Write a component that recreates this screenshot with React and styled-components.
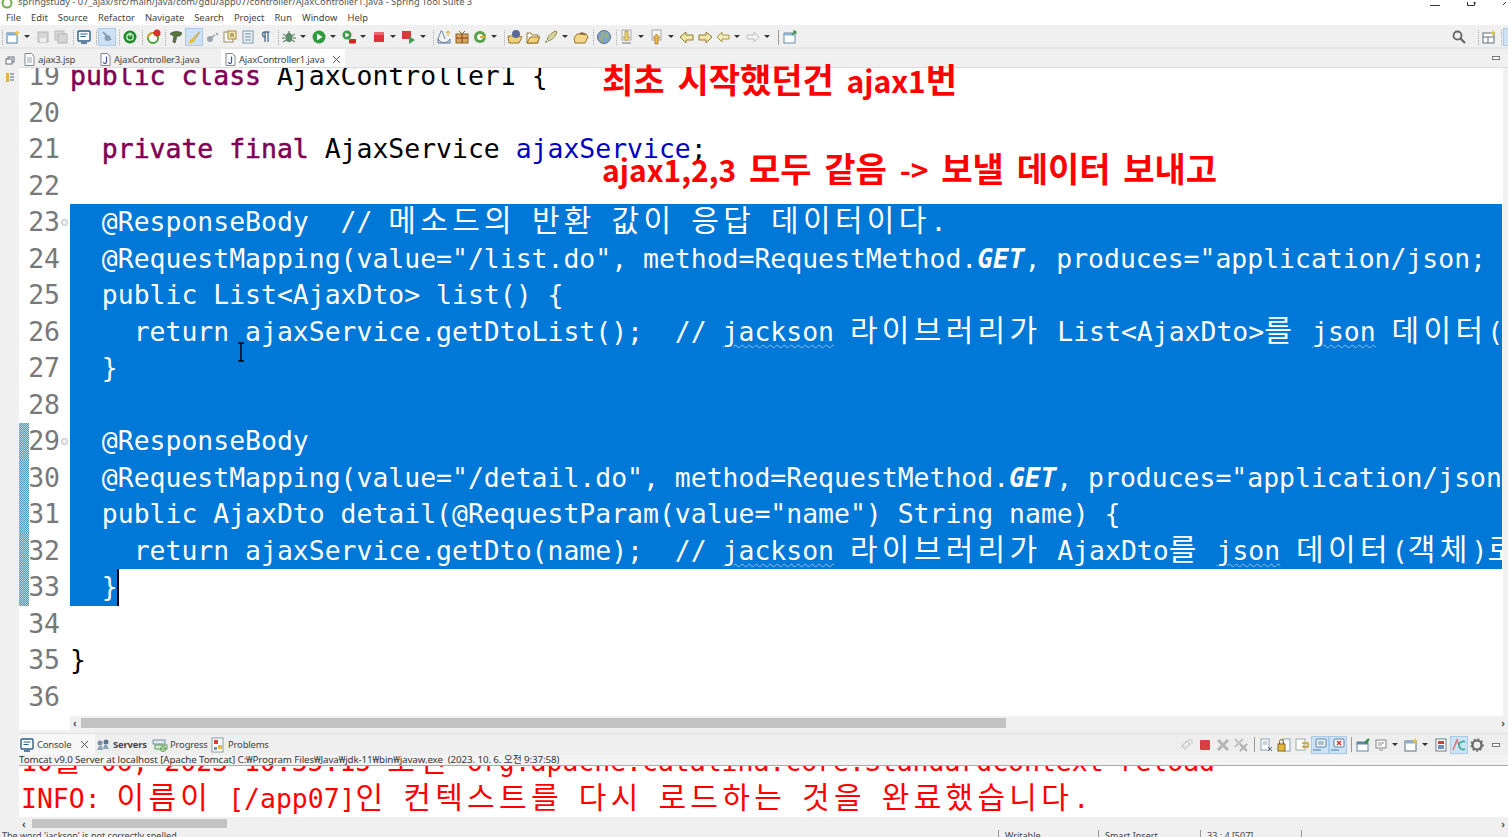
import React from 'react'
import styled, { createGlobalStyle } from 'styled-components'

const GlobalStyle = createGlobalStyle`
  html, body { margin: 0; padding: 0; height: 100%; overflow: hidden; background: #f0f0f0; }
  * { box-sizing: border-box; }
`

const MONO = `"DejaVu Sans Mono", "Noto Sans CJK KR", monospace`
const UI = `"Noto Sans", "Noto Sans CJK KR", sans-serif`

const Page = styled.div`
  position: relative;
  width: 1508px;
  height: 837px;
  display: flex;
  flex-direction: column;
  overflow: hidden;
  background: #f0f0f0;
  font-family: ${UI};
`

const TitleBar = styled.div`
  height: 10px;
  flex: none;
  background: #fff;
  display: flex;
  align-items: flex-end;
  gap: 5px;
  padding-bottom: 2px;
  font-size: 9.3px;
  line-height: 12px;
  color: #555;
  white-space: nowrap;
  overflow: hidden;
`

const AppIcon = styled.svg`
  flex: none;
  margin-left: 1px;
  margin-bottom: -2px;
`

const WindowButtons = styled.svg`
  flex: none;
  margin-left: auto;
  margin-bottom: -2px;
`

const MenuBar = styled.div`
  height: 15px;
  flex: none;
  background: #fff;
  display: flex;
  align-items: center;
  padding-left: 6px;
  gap: 10px;
  font-size: 9.4px;
  color: #444;
`

const ToolBar = styled.div`
  height: 24px;
  flex: none;
  display: flex;
  align-items: center;
  padding: 2px 0 0 0;
  border-bottom: 2px solid #e6e6e6;
  background: #f0f0f0;
  overflow: hidden;
`

const Tool = styled.span`
  width: ${p => p.$w || 16}px;
  height: 16px;
  margin-right: ${p => p.$gap ?? 2}px;
  margin-left: ${p => p.$lead || 0}px;
  flex: none;
  display: inline-flex;
  align-items: center;
  justify-content: center;
  background: ${p => (p.$on ? '#cfe2f5' : 'transparent')};
  outline: ${p => (p.$on ? '1px solid #a9cbe8' : 'none')};
`

const Sep = styled.span`
  flex: none;
  width: 1px;
  height: 15px;
  margin: 0 ${p => (p.$solid ? 3 : 2)}px;
  border-left: 1px ${p => (p.$solid ? 'solid #999' : 'dotted #aaa')};
`

const Spacer = styled.span`
  flex: 1;
`

const Workspace = styled.div`
  flex: 1;
  display: flex;
  min-height: 0;
`

const TrimStack = styled.div`
  width: 19px;
  flex: none;
  display: flex;
  flex-direction: column;
  align-items: center;
  gap: 7px;
  padding-top: 7px;
  background: #f0f0f0;
`

const EditorPane = styled.div`
  flex: 1;
  display: flex;
  flex-direction: column;
  min-width: 0;
`

const TabStrip = styled.div`
  height: 19px;
  flex: none;
  display: flex;
  align-items: stretch;
  padding-left: 3px;
  background: #f0f0f0;
  border-bottom: 1px solid #dcdcdc;
  position: relative;
  z-index: 2;
`

const EditorTab = styled.div`
  display: flex;
  align-items: center;
  gap: 3px;
  padding: 2px 0 0 ${p => (p.$active ? 4 : 2)}px;
  width: ${p => p.$w}px;
  background: ${p => (p.$active ? '#fff' : 'transparent')};
  font-size: 9.5px;
  letter-spacing: -0.2px;
  color: #444;
  white-space: nowrap;
`

const CloseMark = styled.svg`
  flex: none;
  margin-left: ${p => p.$lead}px;
`

const Minimize = styled.span`
  margin-left: ${p => p.$lead || 'auto'};
  margin-right: 8px;
  align-self: center;
  flex: none;
  width: 8px;
  height: 4px;
  border: 1px solid #777;
  background: #fff;
`

const Editor = styled.div`
  height: 662px;
  flex: none;
  position: relative;
  overflow: hidden;
  background: #fff;
  font-family: ${MONO};
  font-size: 26.45px;
`

const CodeArea = styled.div`
  margin-top: -10px;
`

const Line = styled.div`
  height: 36.5px;
  line-height: 36.5px;
  display: flex;
  white-space: pre;
  position: relative;
`

const Gutter = styled.div`
  width: 51px;
  flex: none;
  text-align: right;
  padding-right: 10px;
  color: #787878;
  position: relative;
  ${p => p.$changed && `
    &::before {
      content: '';
      position: absolute;
      left: 0;
      top: 0;
      bottom: 0;
      width: 10px;
      background: repeating-conic-gradient(#4f9dbb 0 25%, #a9d5e0 0 50%) 0 0 / 2px 2px;
    }
  `}
`

const GutterNumber = styled.span`
  position: relative;
`

const FoldMark = styled.span`
  position: absolute;
  right: 2px;
  top: 15px;
  width: 7px;
  height: 7px;
  border-radius: 50%;
  border: 1px solid #bbb;
  background: #eee;
`

const Code = styled.div`
  flex: ${p => (p.$partial ? 'none' : '1')};
  width: ${p => (p.$partial ? '49px' : 'auto')};
  min-width: 0;
  overflow: ${p => (p.$partial ? 'visible' : 'hidden')};
  background: ${p => (p.$selected ? '#0078d7' : 'transparent')};
  color: ${p => (p.$selected ? '#fff' : '#000')};
  margin-right: 6px;
  position: relative;
`

const Keyword = styled.span`
  color: #7f0055;
  -webkit-text-stroke: 0.5px #7f0055;
`

const Field = styled.span`
  color: #0000c0;
`

const Italic = styled.span`
  font-style: italic;
  font-weight: 700;
  letter-spacing: -0.2px;
`

const Squiggle = styled.span`
  text-decoration: underline wavy #9bbfe6 1px;
  text-underline-offset: 3px;
`

const Ko = styled.span`
  font-family: "Noto Sans CJK KR", sans-serif;
  font-size: 30px;
  line-height: 0;
  letter-spacing: 4.3px;
`

const Caret = styled.span`
  position: absolute;
  left: 47px;
  top: 0;
  width: 2px;
  height: 37px;
  background: #000;
`

const Note = styled.div`
  position: absolute;
  left: 602px;
  top: ${p => p.$y}px;
  color: #ff0000;
  font-family: "Noto Sans CJK KR", sans-serif;
  font-weight: 700;
  font-size: 30px;
  word-spacing: 6px;
  line-height: 36px;
  white-space: pre;
  z-index: 3;
`

const NoteKo = styled.span`
  font-size: 34px;
  line-height: 0;
`

const IBeam = styled.svg`
  position: absolute;
  left: 236px;
  top: 342px;
  z-index: 3;
`

const VScroll = styled.div`
  position: absolute;
  top: 0;
  right: 0;
  bottom: 14px;
  width: 5px;
  background: #f0f0f0;
`

const ScrollBar = styled.div`
  height: ${p => p.$h || 14}px;
  flex: none;
  position: relative;
  display: flex;
  align-items: center;
  justify-content: space-between;
  padding: 0 3px;
  background: #f0f0f0;
  font-family: ${UI};
  font-size: 10px;
  font-weight: 700;
  color: #555;
`

const Thumb = styled.div`
  position: absolute;
  left: ${p => p.$left}px;
  width: ${p => p.$width}px;
  top: 2px;
  bottom: 2px;
  background: #c2c2c2;
`

const EditorScroll = styled(ScrollBar)`
  position: absolute;
  left: 51px;
  right: 0;
  bottom: 0;
`

const ConsoleTabs = styled.div`
  height: 22px;
  flex: none;
  margin-top: 3px;
  display: flex;
  align-items: center;
  background: #eeeeee;
  border-top: 1px solid #e0e0e0;
  font-size: 9.5px;
  color: #444;
`

const ViewTab = styled.div`
  display: flex;
  align-items: center;
  gap: 2px;
  height: 100%;
  width: ${p => p.$w}px;
  flex: none;
  background: ${p => (p.$active ? '#f7f7f7' : 'transparent')};
  font-weight: ${p => (p.$bold ? 700 : 400)};
  letter-spacing: -0.2px;
  white-space: nowrap;
`

const ConsoleInfo = styled.div`
  height: 11px;
  flex: none;
  line-height: 10px;
  font-size: 9.8px;
  letter-spacing: -0.12px;
  color: #333;
  background: #f3f3f3;
  border-bottom: 1px solid #aaa;
  white-space: pre;
  overflow: hidden;
`

const ConsoleOut = styled.div`
  height: 51px;
  flex: none;
  overflow: hidden;
  background: #fff;
  color: #ff0000;
  font-family: ${MONO};
  font-size: 26.45px;
  padding-left: 2px;
`

const ConsoleLine = styled.div`
  height: 36.5px;
  line-height: 36.5px;
  white-space: pre;
  &:first-child { margin-top: -22px; }
`

const StatusBar = styled.div`
  height: 7px;
  flex: none;
  display: flex;
  background: #f0f0f0;
  font-size: 9px;
  line-height: 12px;
  color: #444;
  overflow: hidden;
`

const StatusCell = styled.div`
  width: ${p => p.$w}px;
  flex: none;
  padding-left: ${p => p.$pad ?? 6}px;
  border-left: ${p => (p.$line ? '1px solid #999' : 'none')};
  white-space: nowrap;
`

// hangul runs are wider than the mono cell in the editor font
const ko = (text, Wrap = Ko) =>
  text.split(/([\uAC00-\uD7A3]+)/).map((part, i) => (i % 2 ? <Wrap key={i}>{part}</Wrap> : part))

// toolbar glyphs, all in a 16 box
const I = ({ children, w = 16 }) => (
  <svg width={w} height="16" viewBox={`0 0 ${w} 16`}>{children}</svg>
)
const Drop = () => (
  <Tool $w={6} $gap={5} $lead={1}>
    <svg width="6" height="4"><path d="M0 0h6L3 3z" fill="#333" /></svg>
  </Tool>
)

const icons = {
  newFile: <I><rect x="2" y="4" width="10" height="10" fill="#fff" stroke="#4a7fa8" /><rect x="2" y="4" width="10" height="2.5" fill="#7fb1d8" /><path d="M12 1l1 2 2 1-2 1-1 2-1-2-2-1 2-1z" fill="#e8c54a" /></I>,
  save: <I><rect x="3" y="3" width="10" height="10" fill="#d6d6d6" stroke="#b5b5b5" /><rect x="5" y="9" width="6" height="4" fill="#eee" /></I>,
  saveAll: <I><rect x="2" y="2" width="9" height="9" fill="#d9d9d9" stroke="#bbb" /><rect x="5" y="5" width="9" height="9" fill="#d6d6d6" stroke="#b5b5b5" /></I>,
  monitor: <I><rect x="2" y="2" width="12" height="10" rx="1" fill="#fff" stroke="#2b5d8a" strokeWidth="1.4" /><path d="M4.5 5h7M4.5 7.500h5" stroke="#2b5d8a" /><path d="M5 14h6" stroke="#2b5d8a" strokeWidth="1.5" /></I>,
  skip: <I><path d="M4 3l8 8" stroke="#6f8ba5" strokeWidth="1.5" /><circle cx="8.5" cy="9" r="3" fill="#8aa0b5" /></I>,
  boot: <I><circle cx="8" cy="8" r="6.5" fill="#1f8a2a" /><circle cx="8" cy="8" r="3.2" fill="none" stroke="#d8f0d8" strokeWidth="1.3" /><path d="M8 3.500v4" stroke="#d8f0d8" strokeWidth="1.3" /></I>,
  refresh: <I><circle cx="8" cy="9" r="5" fill="#fff" stroke="#4aa03c" strokeWidth="2" /><path d="M3 9a5 5 0 0 1 5-5" stroke="#e29a2c" strokeWidth="2" fill="none" /><circle cx="12" cy="4" r="3.5" fill="#d8322a" /></I>,
  pin: <I><path d="M2 5c3-3 8-3 12-1l-2 3H9l-2 7-2-1 1-6z" fill="#567a3e" stroke="#333" strokeWidth=".6" /></I>,
  brush: <I><path d="M13 2L7 9l2 2 5-7z" fill="#c8b26a" /><path d="M7 9c-2 0-3 2-4 5 3 0 6-1 6-3z" fill="#e8bf2a" /></I>,
  chain: <I><circle cx="6" cy="10" r="3" fill="#9aa5ad" /><path d="M8 8l3-2M12 4l2 2" stroke="#8a959d" strokeWidth="1.4" /></I>,
  doc1: <I><rect x="2" y="3" width="9" height="10" fill="#fff" stroke="#9a8a5a" /><rect x="6" y="2" width="8" height="8" fill="#f3e7b4" stroke="#a58c3c" /><path d="M8 5h4M8 7h4" stroke="#7a6a2a" /></I>,
  doc2: <I><rect x="3" y="2" width="10" height="12" fill="#eef3f7" stroke="#7d97ad" /><path d="M5 5h6M5 8h6M5 11h6" stroke="#6a8aa5" /></I>,
  pilcrow: <I><path d="M7 3v10M10 3v10M11.5 3H7a2.5 2.5 0 0 0 0 5h1" stroke="#4c6f8e" strokeWidth="1.3" fill="none" /></I>,
  bug: <I><ellipse cx="8" cy="8.5" rx="3.5" ry="4.5" fill="#5f8a6a" /><path d="M2 5l3 2M14 5l-3 2M1 9h3M15 9h-3M2 13l3-2M14 13l-3-2M8 2v3" stroke="#456b50" /></I>,
  run: <I><circle cx="8" cy="8" r="6.5" fill="#2f9a3a" /><path d="M6 4.500v7l5.500-3.500z" fill="#fff" /></I>,
  runExt: <I><circle cx="6" cy="6" r="4.5" fill="#3d9a4a" /><path d="M4.500 3.500v5l4-2.500z" fill="#fff" /><rect x="8" y="10" width="7" height="4.5" rx="1" fill="#d22" /></I>,
  stop: <I><rect x="3" y="3" width="10" height="10" fill="#e2313a" /><rect x="3" y="3" width="10" height="3" fill="#ef6a70" /></I>,
  stopRun: <I><rect x="1" y="2" width="9" height="8" fill="#d83a3a" /><path d="M8 7v8l6-4z" fill="#3f9d54" /></I>,
  abc: <I><path d="M2 10l3-8h1l3 8" stroke="#6a8aa5" fill="none" /><path d="M2 10c3 5 9 5 12 0v4H2z" fill="#d7e6f3" stroke="#55799a" /><path d="M12 7V2M10 4l2-2 2 2" stroke="#d9a32a" fill="none" /></I>,
  box: <I><rect x="2" y="5" width="12" height="9" fill="#d9a75a" stroke="#8a6228" /><path d="M2 9h12M8 5v9" stroke="#8a3b22" /><path d="M5 2l3 3 3-3" stroke="#8a6228" fill="none" /></I>,
  gear: <I><circle cx="8" cy="8" r="6" fill="#57a34a" /><circle cx="8" cy="8" r="3" fill="#fff" /><path d="M8 8h6" stroke="#e0a82a" strokeWidth="2" /></I>,
  folderBall: <I><path d="M1 7h11l3 1-3 6H2z" fill="#f0d27d" stroke="#94752a" /><circle cx="9" cy="5" r="4" fill="#5c6a9a" /></I>,
  folder: <I><path d="M2 4h4l1 2h6v8H2z" fill="#fff" stroke="#94752a" /><path d="M2 14l3-6h10l-3 6z" fill="#f0d27d" stroke="#94752a" /></I>,
  rocket: <I><path d="M13 2c-4 1-7 4-9 8l2 2c4-2 7-5 8-9z" fill="#d8d2a0" stroke="#95904e" /><path d="M3 11l-1 3 3-1z" fill="#6d9a4e" /></I>,
  folderGo: <I><path d="M1 9l3-4h9l2 3-3 6H2z" fill="#f2d78b" stroke="#94752a" /><path d="M6 5a4 4 0 0 1 7 1" fill="#8a5f3c" /></I>,
  globe: <I><circle cx="8" cy="8" r="6.5" fill="#7da4c9" stroke="#54708c" /><path d="M5 3c3 1 3 4 1 5s-1 4 1 5M11 4c-2 2 0 4 2 4" stroke="#a8b65f" strokeWidth="1.6" fill="none" /></I>,
  nextAnn: <I><rect x="3" y="1" width="9" height="10" fill="#f4f4f4" stroke="#aaa" /><path d="M6 2h3v6h2l-3.500 4L4 8h2z" fill="#e8cf6a" stroke="#a58c3c" strokeWidth=".7" /><path d="M3 14h9" stroke="#777" /></I>,
  prevAnn: <I><rect x="3" y="1" width="9" height="10" fill="#f4f4f4" stroke="#aaa" /><path d="M7.5 5l3.500 4H9v6H6V9H4z" fill="#e8b84a" stroke="#a5742c" strokeWidth=".7" /></I>,
  backEdit: <I><path d="M1 8l6-5v3h7v5H7v3z" fill="#f2e5a8" stroke="#8f7a30" /></I>,
  fwdEdit: <I><path d="M15 8L9 3v3H2v5h7v3z" fill="#f2e5a8" stroke="#8f7a30" /></I>,
  back: <I><path d="M2 8l5-5v3h7v4H7v3z" fill="#f6edc2" stroke="#a8954a" /></I>,
  fwdOff: <I><path d="M14 8L9 3v3H2v4h7v3z" fill="#f2f2f2" stroke="#c0c0c0" /></I>,
  openView: <I><rect x="2" y="4" width="11" height="10" fill="#fff" stroke="#6d8ca8" /><rect x="2" y="4" width="11" height="2.5" fill="#8fb4d2" /><path d="M10 6l4-4M11.5 1.500l3 3" stroke="#3f8f4d" strokeWidth="1.6" /></I>,
  search: <I><circle cx="6.5" cy="6.5" r="4" fill="none" stroke="#666" strokeWidth="1.8" /><path d="M9.5 9.500l4.500 4.500" stroke="#666" strokeWidth="2.2" /></I>,
  perspective: <I><rect x="2" y="4" width="11" height="10" fill="#fff" stroke="#5f6f7c" /><path d="M2 8h11M7 8v6" stroke="#5f6f7c" /><path d="M12 1l1 2 2 1-2 1-1 2-1-2-2-1 2-1z" fill="#d8c84a" /></I>,
  reconnect: <I><path d="M3 9l5-5 3 3-5 5z" fill="none" stroke="#ccc" strokeWidth="1.5" /><path d="M9 3h4v4" stroke="#ccc" fill="none" /></I>,
  stopSmall: <I><rect x="3" y="3" width="10" height="10" rx="1" fill="#dc3c44" /></I>,
  xGray: <I><path d="M3 3l10 10M13 3L3 13" stroke="#b5b5b5" strokeWidth="3" /></I>,
  xxGray: <I><path d="M2 2l8 8M10 2l-8 8" stroke="#c2c2c2" strokeWidth="2" /><path d="M7 7l7 7M14 7l-7 7" stroke="#b0b0b0" strokeWidth="2" /></I>,
  clearLog: <I><rect x="3" y="2" width="8" height="11" fill="#fff" stroke="#8aa2b5" /><path d="M5 5h4M5 7h4" stroke="#8aa2b5" /><path d="M10 10l4 4M14 10l-4 4" stroke="#667" /></I>,
  lockLog: <I><rect x="7" y="2" width="7" height="12" fill="#fff" stroke="#8aa2b5" /><rect x="2" y="7" width="7" height="7" fill="#e2b93b" stroke="#86691f" /><path d="M3.5 7V4.500a2 2 0 0 1 4 0V7" stroke="#86691f" fill="none" /></I>,
  wordWrap: <I><rect x="2" y="2" width="9" height="11" fill="#fff" stroke="#9aa" /><path d="M8 6h6v4h-5l1-2" stroke="#c79d24" strokeWidth="1.5" fill="none" /></I>,
  showOut: <I><rect x="4" y="2" width="10" height="8" rx="1" fill="#fff" stroke="#4f7ea6" /><path d="M6 5h6M6 7h6" stroke="#4f7ea6" /><path d="M1 13h8" stroke="#4f7ea6" /></I>,
  showErr: <I><rect x="4" y="2" width="10" height="8" rx="1" fill="#fff" stroke="#4f7ea6" /><path d="M7 4l4 4M11 4l-4 4" stroke="#d22" strokeWidth="1.3" /><path d="M1 13h8" stroke="#4f7ea6" /></I>,
  pinConsole: <I><rect x="2" y="5" width="11" height="9" fill="#fff" stroke="#5f86a5" /><rect x="2" y="5" width="11" height="2.5" fill="#5f86a5" /><path d="M10 6l4-4" stroke="#2f8f43" strokeWidth="2.4" /></I>,
  display: <I><rect x="3" y="3" width="10" height="8" fill="#f6f6f6" stroke="#888" /><path d="M5 6h6M5 8h4M6 13h4" stroke="#999" /></I>,
  newConsole: <I><rect x="2" y="4" width="11" height="10" fill="#fff" stroke="#5b6d7a" /><rect x="2" y="4" width="11" height="2.5" fill="#89b0cc" /><path d="M12 1l1 2 2 1-2 1-1 2-1-2-2-1 2-1z" fill="#e5c73f" /></I>,
  layout: <I><rect x="3" y="2" width="10" height="12" fill="#fff" stroke="#6d7b86" /><rect x="5" y="4" width="6" height="3" fill="#c5443c" /><rect x="5" y="8" width="6" height="4" fill="#6b93b5" /></I>,
  ansi: <I><path d="M2 13L6 3l3 8" stroke="#d87a7a" strokeWidth="1.6" fill="none" /><path d="M14 5a4 4 0 1 0 0 7" stroke="#3cb09a" strokeWidth="1.8" fill="none" /></I>,
  cog: <I><circle cx="8" cy="8" r="4.5" fill="none" stroke="#666" strokeWidth="2.2" /><circle cx="8" cy="8" r="6" fill="none" stroke="#777" strokeWidth="1.5" strokeDasharray="2 2" /></I>,
  servers: <I><circle cx="5" cy="6" r="2.5" fill="#7c8fa3" /><circle cx="11" cy="5" r="2.5" fill="#5d7690" /><path d="M2 13l2-4h3l1 4zM8 12l1-4h3l2 4z" fill="#8ea3b5" /></I>,
  progress: <I><rect x="1" y="3" width="12" height="4" fill="#dfe8ef" stroke="#7b94a8" /><rect x="3" y="8" width="12" height="4" fill="#d7ecd2" stroke="#5f9a58" /><circle cx="11" cy="12" r="2.5" fill="none" stroke="#4d9b45" /></I>,
  problems: <I><rect x="2" y="1" width="11" height="14" fill="#fff" stroke="#8d9aa5" /><rect x="4" y="3" width="4" height="4" fill="#d5403a" /><rect x="8" y="8" width="4" height="4" fill="#e4bb3c" /><rect x="4" y="10" width="3" height="3" fill="#6b93b5" /></I>,
}

const FileIcon = ({ kind }) => (
  <svg width="11" height="13" viewBox="0 0 11 13">
    <path d="M1 .5h6.500L10 3v9.500H1z" fill="#fff" stroke="#7d8791" />
    {kind === 'java'
      ? <path d="M6.500 3.500v5.500a1.500 1.500 0 0 1-3 0" stroke="#4a5a9a" fill="none" strokeWidth="1.3" />
      : <path d="M3 5h5M3 7h5M3 9h5" stroke="#9aa4ad" />}
  </svg>
)

const Close = ({ lead }) => (
  <CloseMark $lead={lead} width="9" height="9"><path d="M1 1l7 7M8 1L1 8" stroke="#555" /></CloseMark>
)

const toolbar = [
  '|', ['newFile', 1], ['save'], ['saveAll'], '|', ['monitor'], '|', ['skip', 0, 1], '|', ['boot'], '|', ['refresh'], '|',
  ['pin'], ['brush', 0, 1], ['chain'], ['doc1'], ['doc2'], ['pilcrow'], '|',
  ['bug', 1], ['run', 1], ['runExt', 1], ['stop', 1], ['stopRun', 1], '|',
  ['abc'], ['box'], ['gear', 1], '|', ['folderBall'], ['folder'], ['rocket', 1], ['folderGo'], '|', ['globe'], '|',
  ['nextAnn', 1], ['prevAnn', 1], ['backEdit'], ['fwdEdit'], ['back', 1], ['fwdOff', 1], '/', ['openView'],
]

const consoleTools = [
  ['reconnect'], ['stopSmall'], ['xGray'], ['xxGray'], '/', ['clearLog'], ['lockLog'], ['wordWrap'], ['showOut', 0, 1], ['showErr', 0, 1], '/',
  ['pinConsole'], ['display', 1], ['newConsole', 1], ['layout'], ['ansi', 0, 1], ['cog'],
]

function ToolRow({ items }) {
  return items.map((item, i) => {
    if (item === '|') return <Sep key={i} />
    if (item === '/') return <Sep key={i} $solid />
    const [name, drop, on] = item
    return (
      <React.Fragment key={i}>
        <Tool $on={on}>{icons[name]}</Tool>
        {drop ? <Drop /> : null}
      </React.Fragment>
    )
  })
}

const lines = [
  { n: 19, code: <><Keyword>public</Keyword> <Keyword>class</Keyword> AjaxController1 {'{'}</> },
  { n: 20 },
  { n: 21, code: <>  <Keyword>private</Keyword> <Keyword>final</Keyword> AjaxService <Field>ajaxService</Field>;</> },
  { n: 22 },
  { n: 23, sel: 1, fold: 1, code: <>  @ResponseBody  // {ko('메소드의 반환 값이 응답 데이터이다.')}</> },
  { n: 24, sel: 1, code: <>  @RequestMapping(value="/list.do", method=RequestMethod.<Italic>GET</Italic>, produces="application/json; charset=UTF-8")</> },
  { n: 25, sel: 1, code: <>  public List&lt;AjaxDto&gt; list() {'{'}</> },
  { n: 26, sel: 1, code: <>    return ajaxService.getDtoList();  // <Squiggle>jackson</Squiggle> {ko('라이브러리가 ')}List&lt;AjaxDto&gt;{ko('를 ')}<Squiggle>json</Squiggle> {ko('데이터(배열)로 변환한다.')}</> },
  { n: 27, sel: 1, code: <>  {'}'}</> },
  { n: 28, sel: 1 },
  { n: 29, sel: 1, fold: 1, changed: 1, code: <>  @ResponseBody</> },
  { n: 30, sel: 1, changed: 1, code: <>  @RequestMapping(value="/detail.do", method=RequestMethod.<Italic>GET</Italic>, produces="application/json; charset=UTF-8")</> },
  { n: 31, sel: 1, changed: 1, code: <>  public AjaxDto detail(@RequestParam(value="name") String name) {'{'}</> },
  { n: 32, sel: 1, changed: 1, code: <>    return ajaxService.getDto(name);  // <Squiggle>jackson</Squiggle> {ko('라이브러리가 ')}AjaxDto{ko('를 ')}<Squiggle>json</Squiggle> {ko('데이터(객체)로 변환한다.')}</> },
  { n: 33, partial: 1, changed: 1, code: <>  {'}'}<Caret /></> },
  { n: 34 },
  { n: 35, code: <>{'}'}</> },
  { n: 36 },
]

export default function App() {
  return (
    <Page>
      <GlobalStyle />
      <TitleBar>
        <AppIcon width="12" height="10" viewBox="0 0 12 10"><circle cx="6" cy="3" r="4.500" fill="none" stroke="#6fae4a" strokeWidth="2" /></AppIcon>
        springstudy - 07_ajax/src/main/java/com/gdu/app07/controller/AjaxController1.java - Spring Tool Suite 3
        <WindowButtons width="80" height="8" viewBox="0 0 80 8">
          <path d="M2 3.500h10" stroke="#333" />
          <path d="M39.500 0v3.500h7V0M46 0v1h2" stroke="#333" fill="none" />
          <path d="M75 3l3-3" stroke="#333" />
        </WindowButtons>
      </TitleBar>
      <MenuBar>
        {['File', 'Edit', 'Source', 'Refactor', 'Navigate', 'Search', 'Project', 'Run', 'Window', 'Help'].map(m => <span key={m}>{m}</span>)}
      </MenuBar>
      <ToolBar>
        <ToolRow items={toolbar} />
        <Spacer />
        <Tool $gap={9}>{icons.search}</Tool>
        <Sep />
        <Tool>{icons.perspective}</Tool>
        <Sep />
        <Tool $w={4} $gap={0} $on />
      </ToolBar>
      <Workspace>
        <TrimStack>
          <svg width="10" height="9"><rect x="3" y="1" width="6" height="5" fill="#fff" stroke="#667" /><rect x="1" y="3" width="6" height="5" fill="#fff" stroke="#667" /></svg>
          <svg width="10" height="11"><rect x="1" y="1" width="3" height="9" fill="#e0b24a" /><path d="M5 2h4M5 5h4M5 8h4" stroke="#567" /></svg>
        </TrimStack>
        <EditorPane>
          <TabStrip>
            <EditorTab $w={76}><FileIcon />ajax3.jsp</EditorTab>
            <EditorTab $w={123}><FileIcon kind="java" />AjaxController3.java</EditorTab>
            <EditorTab $active $w={124}><FileIcon kind="java" />AjaxController1.java<Close lead={4} /></EditorTab>
            <Minimize />
          </TabStrip>
          <Editor>
            <CodeArea>
              {lines.map(l => (
                <Line key={l.n}>
                  <Gutter $changed={l.changed}>
                    <GutterNumber>{l.n}</GutterNumber>
                    {l.fold ? <FoldMark /> : null}
                  </Gutter>
                  <Code $selected={l.sel || l.partial} $partial={l.partial}>{l.code || ' '}</Code>
                </Line>
              ))}
            </CodeArea>
            <VScroll />
            <EditorScroll>
              <span>‹</span>
              <Thumb $left={11} $width={925} />
              <span>›</span>
            </EditorScroll>
          </Editor>
          <ConsoleTabs>
            <ViewTab $active $w={76}><Tool $gap={0}>{icons.monitor}</Tool>Console<Close lead={7} /></ViewTab>
            <ViewTab $bold $w={57}><Tool $gap={0}>{icons.servers}</Tool>Servers</ViewTab>
            <ViewTab $w={58}><Tool $gap={0}>{icons.progress}</Tool>Progress</ViewTab>
            <ViewTab $w={70}><Tool $gap={0}>{icons.problems}</Tool>Problems</ViewTab>
            <Spacer />
            <ToolRow items={consoleTools} />
            <Minimize $lead="5px" />
          </ConsoleTabs>
          <ConsoleInfo>Tomcat v9.0 Server at localhost [Apache Tomcat] C:₩Program Files₩Java₩jdk-11₩bin₩javaw.exe  (2023. 10. 6. 오전 9:37:58)</ConsoleInfo>
          <ConsoleOut>
            <ConsoleLine>{ko('10월 06, 2023 10:35:15 오전 org.apache.catalina.core.StandardContext reload')}</ConsoleLine>
            <ConsoleLine>{ko('INFO: 이름이 [/app07]인 컨텍스트를 다시 로드하는 것을 완료했습니다.')}</ConsoleLine>
          </ConsoleOut>
          <ScrollBar $h={13}>
            <span>‹</span>
            <Thumb $left={13} $width={195} />
            <span>›</span>
          </ScrollBar>
        </EditorPane>
      </Workspace>
      <StatusBar>
        <StatusCell $w={998} $pad={2}>The word 'jackson' is not correctly spelled</StatusCell>
        <StatusCell $w={100} $line>Writable</StatusCell>
        <StatusCell $w={102} $line>Smart Insert</StatusCell>
        <StatusCell $w={101} $line>33 : 4 [507]</StatusCell>
        <StatusCell $w={100} $line />
      </StatusBar>
      <Note $y={62}>{ko('최초 시작했던건 ajax1번', NoteKo)}</Note>
      <Note $y={151}>{ko('ajax1,2,3 모두 같음 -> 보낼 데이터 보내고', NoteKo)}</Note>
      <IBeam width="10" height="20" viewBox="0 0 10 20">
        <path d="M2 1h6M2 19h6M5 1v18" stroke="#000" strokeWidth="1.5" />
      </IBeam>
    </Page>
  )
}
